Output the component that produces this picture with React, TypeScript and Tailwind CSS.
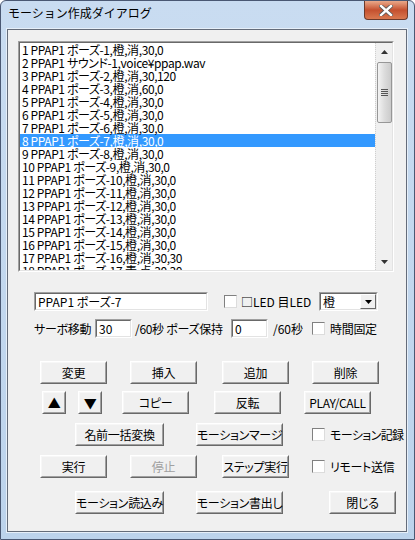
import React from 'react';

const font = { fontFamily: '"Noto Sans CJK JP", "Liberation Sans", sans-serif' };

const rows = [
  '1 PPAP1 ポーズ-1,橙,消,30,0',
  '2 PPAP1 サウンド-1,voice¥ppap.wav',
  '3 PPAP1 ポーズ-2,橙,消,30,120',
  '4 PPAP1 ポーズ-3,橙,消,60,0',
  '5 PPAP1 ポーズ-4,橙,消,30,0',
  '6 PPAP1 ポーズ-5,橙,消,30,0',
  '7 PPAP1 ポーズ-6,橙,消,30,0',
  '8 PPAP1 ポーズ-7,橙,消,30,0',
  '9 PPAP1 ポーズ-8,橙,消,30,0',
  '10 PPAP1 ポーズ-9,橙,消,30,0',
  '11 PPAP1 ポーズ-10,橙,消,30,0',
  '12 PPAP1 ポーズ-11,橙,消,30,0',
  '13 PPAP1 ポーズ-12,橙,消,30,0',
  '14 PPAP1 ポーズ-13,橙,消,30,0',
  '15 PPAP1 ポーズ-14,橙,消,30,0',
  '16 PPAP1 ポーズ-15,橙,消,30,0',
  '17 PPAP1 ポーズ-16,橙,消,30,30',
  '18 PPAP1 ポーズ-17,青,点,30,30',
];

function Btn({ label, w = 'w-[67px]', disabled = false, className = '' }: { label: React.ReactNode; w?: string; disabled?: boolean; className?: string }) {
  return (
    <div className={`${w} h-[23px] shrink-0 border border-t-white border-l-white border-r-[#696969] border-b-[#696969] ${className}`}>
      <div className={`w-full h-full flex items-center justify-center border border-t-[#f7f7f7] border-l-[#f7f7f7] border-r-[#a0a0a0] border-b-[#a0a0a0] text-[12px] leading-none whitespace-nowrap tracking-[-0.3px] ${disabled ? 'text-[#a0a0a0]' : 'text-black'}`}>
        {label}
      </div>
    </div>
  );
}

function Check({ className = '' }: { className?: string }) {
  return <div className={`w-[13px] h-[13px] shrink-0 bg-white border border-[#808080] border-r-[#dcdcdc] border-b-[#dcdcdc] ${className}`} />;
}

function Field({ value, w }: { value: string; w: string }) {
  return (
    <div className={`${w} h-[19px] shrink-0 bg-white border border-[#a0a0a0] border-r-white border-b-white`}>
      <div className="w-full h-full border border-[#696969] border-r-[#e3e3e3] border-b-[#e3e3e3] pl-[2px] text-[12px] leading-[15px] whitespace-nowrap">
        {value}
      </div>
    </div>
  );
}

export default function App() {
  return (
    <div className="w-[415px] h-[540px] bg-gradient-to-b from-[#c9dcf1] to-[#bcd3ec] border border-[#4a5873] rounded-t-[6px] flex flex-col text-black [font-feature-settings:'palt']" style={font}>
      <div className="h-[28px] flex items-start shrink-0">
        <span className="ml-[7px] mt-[4px] text-[12px] leading-[16px] text-black [font-feature-settings:normal]">モーション作成ダイアログ</span>
        <div className="ml-auto mr-[6px] mt-0 w-[44px] h-[19px] rounded-b-[4px] border border-[#6b3a2c] border-t-0 bg-gradient-to-b from-[#e9a98a] via-[#c4502f] to-[#d9784f] flex items-center justify-center">
          <svg width="14" height="11" viewBox="0 0 14 11">
            <path d="M2 1 L12 10 M12 1 L2 10" stroke="#555" strokeWidth="4" strokeLinecap="square" />
            <path d="M2 1 L12 10 M12 1 L2 10" stroke="#fff" strokeWidth="2.4" strokeLinecap="square" />
          </svg>
        </div>
      </div>

      <div className="ml-[6px] w-[400px] h-[503px] bg-[#f0f0f0] border border-[#646c7a] shadow-[0_0_0_1px_#e6eff9] flex flex-col">
        {/* list box */}
        <div className="ml-[10px] mt-[11px] w-[376px] h-[231px] border border-[#a0a0a0] border-r-white border-b-white">
          <div className="w-full h-full border border-[#696969] border-r-[#e3e3e3] border-b-[#e3e3e3] bg-white flex">
            <div className="flex-1 overflow-hidden">
              {rows.map((r, i) => (
                <div
                  key={i}
                  className={`h-[13px] pl-[2px] text-[12px] leading-[13px] tracking-[-0.4px] whitespace-nowrap ${i === 7 ? 'bg-[#3399ff] text-white' : 'text-black'}`}
                >
                  {r}
                </div>
              ))}
            </div>
            <div className="w-[17px] h-full bg-[#f0f0f0] border-l border-dotted border-[#cfcfcf] flex flex-col items-center">
              <div className="h-[17px] w-full flex items-center justify-center">
                <svg width="7" height="4" viewBox="0 0 7 4"><path d="M0 4 L3.5 0 L7 4 Z" fill="#333" /></svg>
              </div>
              <div className="mt-[2px] w-[15px] h-[61px] rounded-[2px] border border-[#979797] bg-gradient-to-r from-[#f3f3f3] via-[#dcdcdc] to-[#cbcbcb] flex items-center justify-center">
                <svg width="7" height="8" viewBox="0 0 7 8">
                  <path d="M0 0.5 H7 M0 2.5 H7 M0 4.5 H7 M0 6.5 H7" stroke="#555" strokeWidth="1" />
                </svg>
              </div>
              <div className="flex-1" />
              <div className="h-[17px] w-full flex items-center justify-center">
                <svg width="7" height="4" viewBox="0 0 7 4"><path d="M0 0 L3.5 4 L7 0 Z" fill="#333" /></svg>
              </div>
            </div>
          </div>
        </div>

        {/* name row */}
        <div className="mt-[20px] flex items-center h-[19px] text-[12px]">
          <div className="ml-[26px]"><Field value="PPAP1 ポーズ-7" w="w-[174px]" /></div>
          <Check className="ml-[16px]" />
          <span className="ml-[4px] leading-none whitespace-nowrap">□LED 目LED</span>
          <div className="ml-auto mr-[28px] w-[59px] h-[19px] bg-white border border-[#a0a0a0] border-r-white border-b-white">
            <div className="w-full h-full border border-[#696969] border-r-[#e3e3e3] border-b-[#e3e3e3] flex">
              <span className="flex-1 pl-[2px] leading-[15px]">橙</span>
              <div className="w-[16px] h-full bg-[#f0f0f0] border border-t-white border-l-white border-r-[#696969] border-b-[#696969] flex items-center justify-center">
                <svg width="7" height="4" viewBox="0 0 7 4"><path d="M0 0 L3.5 4 L7 0 Z" fill="#000" /></svg>
              </div>
            </div>
          </div>
        </div>

        {/* time row */}
        <div className="mt-[8px] flex items-center h-[19px] text-[12px] whitespace-nowrap">
          <span className="ml-[26px] w-[61px] leading-none tracking-[-0.3px]">サーボ移動</span>
          <Field value="30" w="w-[37px]" />
          <span className="w-[99px] pl-[3px] leading-none tracking-[-0.3px]">/60秒 ポーズ保持</span>
          <Field value="0" w="w-[37px]" />
          <span className="w-[44px] pl-[5px] leading-none">/60秒</span>
          <Check />
          <span className="ml-[5px] leading-none tracking-[-0.3px]">時間固定</span>
        </div>

        {/* buttons */}
        <div className="mt-[23px] flex">
          <Btn label="変更" className="ml-[32px]" />
          <Btn label="挿入" className="ml-[23px]" />
          <Btn label="追加" className="ml-[25px]" />
          <Btn label="削除" className="ml-[23px]" />
        </div>
        <div className="mt-[7px] flex">
          <Btn label={<span className="text-[13px]">▲</span>} w="w-[24px]" className="ml-[34px]" />
          <Btn label={<span className="text-[13px]">▼</span>} w="w-[24px]" className="ml-[12px]" />
          <Btn label="コピー" className="ml-[20px]" />
          <Btn label="反転" className="ml-[25px]" />
          <Btn label="PLAY/CALL" className="ml-[23px]" />
        </div>
        <div className="mt-[9px] flex items-center">
          <Btn label="名前一括変換" w="w-[89px]" className="ml-[67px]" />
          <Btn label="モーションマージ" w="w-[87px]" className="ml-[32px]" />
          <Check className="ml-[29px]" />
          <span className="ml-[5px] text-[12px] leading-none whitespace-nowrap tracking-[-0.6px]">モーション記録</span>
        </div>
        <div className="mt-[9px] flex items-center">
          <Btn label="実行" className="ml-[32px]" />
          <Btn label="停止" disabled className="ml-[23px]" />
          <Btn label="ステップ実行" className="ml-[25px]" />
          <Check className="ml-[23px]" />
          <span className="ml-[5px] text-[12px] leading-none whitespace-nowrap tracking-[-0.3px]">リモート送信</span>
        </div>
        <div className="mt-[13px] flex">
          <Btn label="モーション読込み" w="w-[89px]" className="ml-[67px]" />
          <Btn label="モーション書出し" w="w-[87px]" className="ml-[32px]" />
          <Btn label="閉じる" className="ml-[46px]" />
        </div>
      </div>
    </div>
  );
}
